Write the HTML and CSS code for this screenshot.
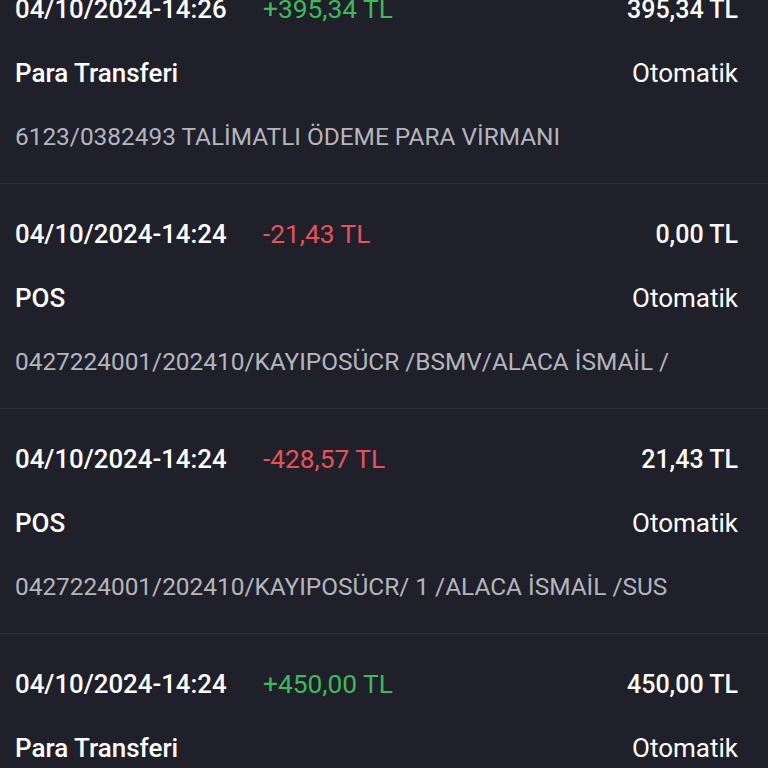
FILE: index.html
```html
<!DOCTYPE html>
<html lang="tr">
<head>
<meta charset="utf-8">
<link rel="stylesheet" href="styles.css">
</head>
<body>
<div class="list">
  <div class="item first">
    <div class="row top">
      <span class="date">04/10/2024-14:26</span>
      <span class="amount pos">+395,34 TL</span>
      <span class="balance">395,34 TL</span>
    </div>
    <div class="row mid">
      <span class="type">Para Transferi</span>
      <span class="mode">Otomatik</span>
    </div>
    <div class="desc">6123/0382493 TALİMATLI ÖDEME PARA VİRMANI</div>
  </div>
  <div class="item">
    <div class="row top">
      <span class="date">04/10/2024-14:24</span>
      <span class="amount neg">-21,43 TL</span>
      <span class="balance">0,00 TL</span>
    </div>
    <div class="row mid">
      <span class="type">POS</span>
      <span class="mode">Otomatik</span>
    </div>
    <div class="desc">0427224001/202410/KAYIPOSÜCR /BSMV/ALACA İSMAİL /</div>
  </div>
  <div class="item">
    <div class="row top">
      <span class="date">04/10/2024-14:24</span>
      <span class="amount neg">-428,57 TL</span>
      <span class="balance">21,43 TL</span>
    </div>
    <div class="row mid">
      <span class="type">POS</span>
      <span class="mode">Otomatik</span>
    </div>
    <div class="desc">0427224001/202410/KAYIPOSÜCR/ 1 /ALACA İSMAİL /SUS</div>
  </div>
  <div class="item">
    <div class="row top">
      <span class="date">04/10/2024-14:24</span>
      <span class="amount pos">+450,00 TL</span>
      <span class="balance">450,00 TL</span>
    </div>
    <div class="row mid">
      <span class="type">Para Transferi</span>
      <span class="mode">Otomatik</span>
    </div>
    <div class="desc">0427224001/202410/KAYIPOSÜCR /BSMV/ALACA İSMAİL /</div>
  </div>
</div>
</body>
</html>
```

FILE: styles.css
```css
html, body {
  margin: 0;
  padding: 0;
  background: #1f2029;
  width: 768px;
  height: 768px;
  overflow: hidden;
  font-family: Roboto, "Noto Sans", sans-serif;
}
.list {
  display: flex;
  flex-direction: column;
  margin-top: -41px;
}
.item {
  display: flex;
  flex-direction: column;
  padding: 34px 30px 0 15px;
  box-sizing: border-box;
  height: 225px;
  border-bottom: 1px solid #2e303a;
}
.row {
  display: flex;
  align-items: center;
  height: 32px;
  white-space: nowrap;
}
.top { margin-bottom: 32px; }
.mid { margin-bottom: 32px; }
.date {
  color: #ffffff;
  font-size: 25.8px;
  font-weight: 500;
  width: 248px;
}
.amount {
  font-size: 26.3px;
  font-weight: 400;
  flex: 1;
}
.pos { color: #3dba5c; }
.neg { color: #e5525c; }
.balance {
  color: #ffffff;
  font-size: 25px;
  font-weight: 500;
}
.type {
  color: #ffffff;
  font-size: 26px;
  font-weight: 500;
  flex: 1;
}
.mode {
  color: #ffffff;
  font-size: 26px;
  font-weight: 400;
}
.desc {
  color: #b4b6be;
  font-size: 24.4px;
  height: 32px;
  line-height: 32px;
  white-space: nowrap;
}
```
